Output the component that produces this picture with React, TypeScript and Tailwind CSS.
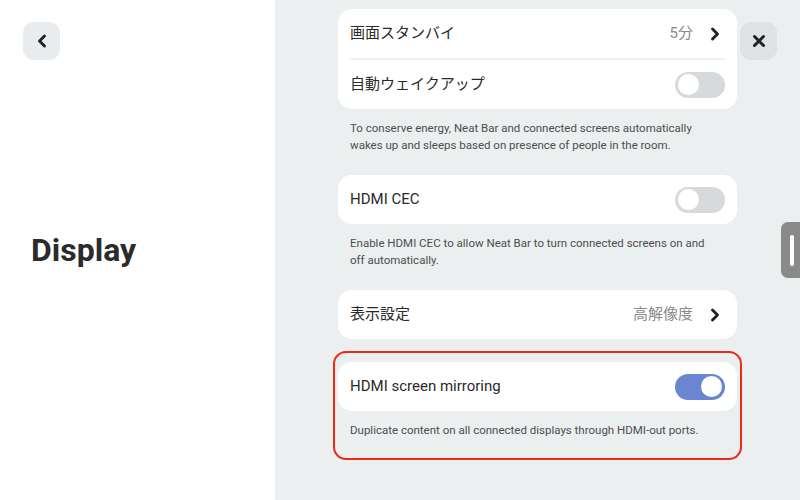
import { ChevronLeft, ChevronRight, X } from 'lucide-react'

const font = { fontFamily: 'Roboto, "Noto Sans CJK JP", sans-serif' }

function Toggle({ on = false }: { on?: boolean }) {
  return (
    <div
      className={
        on
          ? 'w-[50px] h-[26px] rounded-full bg-[#6a86d0] flex items-center justify-end px-[3px]'
          : 'w-[50px] h-[26px] rounded-full bg-[#d6dadd] flex items-center justify-start px-[3px]'
      }
    >
      <div className="w-[21px] h-[21px] rounded-full bg-white" />
    </div>
  )
}

function Row({ label, value, toggle, on }: { label: string; value?: string; toggle?: boolean; on?: boolean }) {
  return (
    <div className="h-[49px] flex items-center justify-between px-3">
      <span className="text-[15px] text-[#2a2a2a]">{label}</span>
      {toggle ? (
        <Toggle on={on} />
      ) : (
        <span className="flex items-center gap-[12px]">
          <span className="text-[15px] text-[#8a8a8a]">{value}</span>
          <ChevronRight className="w-[20px] h-[20px] text-[#222]" strokeWidth={3.5} />
        </span>
      )}
    </div>
  )
}

function Note({ children }: { children: React.ReactNode }) {
  return <p className="mt-[11px] pl-3 pr-[26px] text-[11.5px] leading-[16.5px] text-[#4d4d4d]">{children}</p>
}

export default function App() {
  return (
    <div className="w-[800px] h-[500px] flex overflow-hidden relative" style={font}>
      <aside className="w-[275px] shrink-0 bg-white flex flex-col px-[23px] pt-[22px]">
        <button className="w-[37px] h-[38px] rounded-[11px] bg-[#e9ecee] flex items-center justify-center">
          <ChevronLeft className="w-[20px] h-[20px] text-[#222]" strokeWidth={3.5} />
        </button>
        <h1 className="mt-[166px] ml-[8px] text-[32px] font-bold text-[#2b2b2b]">Display</h1>
      </aside>

      <main className="flex-1 bg-[#eceff0] pl-[63px] pt-[9px]">
        <div className="w-[399px]">
          <div className="bg-white rounded-[14px]">
            <Row label="画面スタンバイ" value="5分" />
            <div className="mx-3 h-[2px] bg-[#eef0f1]" />
            <Row label="自動ウェイクアップ" toggle />
          </div>
          <Note>
            To conserve energy, Neat Bar and connected screens automatically wakes up and sleeps based on presence of people in the room.
          </Note>

          <div className="mt-[22px] bg-white rounded-[14px]">
            <Row label="HDMI CEC" toggle />
          </div>
          <Note>Enable HDMI CEC to allow Neat Bar to turn connected screens on and off automatically.</Note>

          <div className="mt-[22px] bg-white rounded-[14px]">
            <Row label="表示設定" value="高解像度" />
          </div>

          <div className="mt-[12px] -mx-[5px] px-[3px] pt-[9px] pb-[19px] border-2 border-[#ec2a17] rounded-[13px]">
            <div className="bg-white rounded-[14px]">
              <Row label="HDMI screen mirroring" toggle on />
            </div>
            <Note>Duplicate content on all connected displays through HDMI-out ports.</Note>
          </div>
        </div>
      </main>

      <button className="absolute left-[740px] top-[22px] w-[37px] h-[38px] rounded-[11px] bg-[#dfe2e4] flex items-center justify-center">
        <X className="w-[18px] h-[18px] text-[#222]" strokeWidth={4} />
      </button>

      <div className="absolute left-[781px] top-[222px] w-[25px] h-[56px] rounded-[7px] bg-[#8a8a8a] flex items-center pl-[9px]">
        <div className="w-[4px] h-[31px] rounded-full bg-white" />
      </div>
    </div>
  )
}
